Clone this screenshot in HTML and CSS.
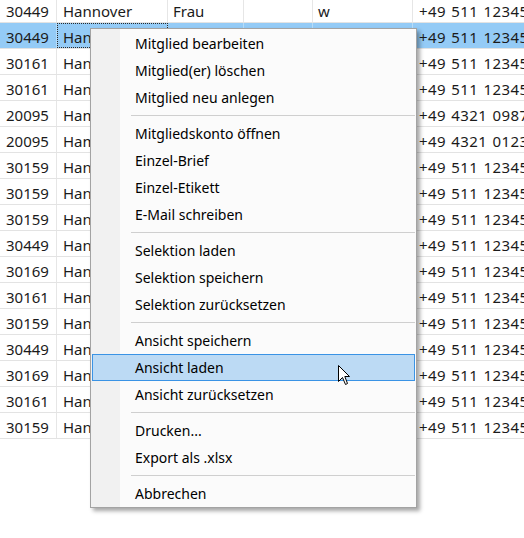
FILE: index.html
```html
<!DOCTYPE html>
<html lang="de">
<head>
<meta charset="utf-8">
<title>Mitglieder</title>
<link rel="stylesheet" href="styles.css">
</head>
<body>
<div class="grid">
  <div class="row"><div class="c c1">30449</div><div class="c c2">Hannover</div><div class="c c3">Frau</div><div class="c c4"></div><div class="c c5">w</div><div class="c c6">+49 511 123456</div></div>
  <div class="row sel"><div class="c c1">30449</div><div class="c c2 focus">Hannover</div><div class="c c3">Frau</div><div class="c c4"></div><div class="c c5">w</div><div class="c c6">+49 511 123456</div></div>
  <div class="row"><div class="c c1">30161</div><div class="c c2">Hannover</div><div class="c c3">Herr</div><div class="c c4"></div><div class="c c5">m</div><div class="c c6">+49 511 123456</div></div>
  <div class="row"><div class="c c1">30161</div><div class="c c2">Hannover</div><div class="c c3">Frau</div><div class="c c4"></div><div class="c c5">w</div><div class="c c6">+49 511 123456</div></div>
  <div class="row"><div class="c c1">20095</div><div class="c c2">Hamburg</div><div class="c c3">Herr</div><div class="c c4"></div><div class="c c5">m</div><div class="c c6">+49 4321 098765</div></div>
  <div class="row"><div class="c c1">20095</div><div class="c c2">Hamburg</div><div class="c c3">Frau</div><div class="c c4"></div><div class="c c5">w</div><div class="c c6">+49 4321 012345</div></div>
  <div class="row"><div class="c c1">30159</div><div class="c c2">Hannover</div><div class="c c3">Herr</div><div class="c c4"></div><div class="c c5">m</div><div class="c c6">+49 511 123456</div></div>
  <div class="row"><div class="c c1">30159</div><div class="c c2">Hannover</div><div class="c c3">Frau</div><div class="c c4"></div><div class="c c5">w</div><div class="c c6">+49 511 123456</div></div>
  <div class="row"><div class="c c1">30159</div><div class="c c2">Hannover</div><div class="c c3">Herr</div><div class="c c4"></div><div class="c c5">m</div><div class="c c6">+49 511 123456</div></div>
  <div class="row"><div class="c c1">30449</div><div class="c c2">Hannover</div><div class="c c3">Frau</div><div class="c c4"></div><div class="c c5">w</div><div class="c c6">+49 511 123456</div></div>
  <div class="row"><div class="c c1">30169</div><div class="c c2">Hannover</div><div class="c c3">Herr</div><div class="c c4"></div><div class="c c5">m</div><div class="c c6">+49 511 123456</div></div>
  <div class="row"><div class="c c1">30161</div><div class="c c2">Hannover</div><div class="c c3">Frau</div><div class="c c4"></div><div class="c c5">w</div><div class="c c6">+49 511 123456</div></div>
  <div class="row"><div class="c c1">30159</div><div class="c c2">Hannover</div><div class="c c3">Herr</div><div class="c c4"></div><div class="c c5">m</div><div class="c c6">+49 511 123456</div></div>
  <div class="row"><div class="c c1">30449</div><div class="c c2">Hannover</div><div class="c c3">Frau</div><div class="c c4"></div><div class="c c5">w</div><div class="c c6">+49 511 123456</div></div>
  <div class="row"><div class="c c1">30169</div><div class="c c2">Hannover</div><div class="c c3">Herr</div><div class="c c4"></div><div class="c c5">m</div><div class="c c6">+49 511 123456</div></div>
  <div class="row"><div class="c c1">30161</div><div class="c c2">Hannover</div><div class="c c3">Frau</div><div class="c c4"></div><div class="c c5">w</div><div class="c c6">+49 511 123456</div></div>
  <div class="row"><div class="c c1">30159</div><div class="c c2">Hannover</div><div class="c c3">Herr</div><div class="c c4"></div><div class="c c5">m</div><div class="c c6">+49 511 123456</div></div>
</div>

<div class="menu">
  <div class="item">Mitglied bearbeiten</div>
  <div class="item">Mitglied(er) löschen</div>
  <div class="item">Mitglied neu anlegen</div>
  <div class="sep"></div>
  <div class="item">Mitgliedskonto öffnen</div>
  <div class="item">Einzel-Brief</div>
  <div class="item">Einzel-Etikett</div>
  <div class="item">E-Mail schreiben</div>
  <div class="sep"></div>
  <div class="item">Selektion laden</div>
  <div class="item">Selektion speichern</div>
  <div class="item">Selektion zurücksetzen</div>
  <div class="sep"></div>
  <div class="item">Ansicht speichern</div>
  <div class="item hover">Ansicht laden</div>
  <div class="item">Ansicht zurücksetzen</div>
  <div class="sep"></div>
  <div class="item">Drucken...</div>
  <div class="item">Export als .xlsx</div>
  <div class="sep"></div>
  <div class="item">Abbrechen</div>
</div>

<svg class="cursor" width="13" height="21" viewBox="0 0 13 21">
  <path d="M0.5 0.5 L0.5 16.5 L4.5 12.5 L7.5 19.5 L9.5 18.5 L6.8 11.5 L11.5 11.5 Z" fill="#fff" stroke="#000" stroke-width="1" stroke-linejoin="miter"/>
</svg>
</body>
</html>
```

FILE: styles.css
```css
html, body {
  margin: 0;
  padding: 0;
  background: #ffffff;
  overflow: hidden;
  width: 524px;
  height: 538px;
}

body {
  position: relative;
  font-family: "Noto Sans", "Open Sans", sans-serif;
  font-size: 15px;
  color: #1b1b1b;
}

.grid {
  margin-top: -3px;
  width: 600px;
}

.row {
  display: flex;
  height: 25px;
  border-bottom: 1px solid #e3e3e3;
}

.c {
  box-sizing: border-box;
  height: 25px;
  line-height: 28px;
  padding-left: 6px;
  border-right: 1px solid #e6e6e6;
  white-space: nowrap;
  overflow: hidden;
  flex: none;
}

.c1 { width: 57px; }
.c2 { width: 111px; }
.c3 { width: 76px; padding-left: 5px; }
.c4 { width: 69px; }
.c5 { width: 100px; padding-left: 5px; }
.c6 { width: 160px; border-right: none; letter-spacing: 0.4px; word-spacing: 1px; }

.row.sel {
  background: #94cbf6;
}

.row.sel .c {
  border-right-color: #b7dcf8;
}

.focus {
  outline: 1px dotted #2a2a2a;
  outline-offset: -1px;
}

.menu {
  position: absolute;
  left: 90px;
  top: 28px;
  width: 325px;
  padding: 1px 0 0 0;
  border: 1px solid #a3a3a3;
  background: linear-gradient(to right, #f1f1f1 0, #f1f1f1 29px, #fbfbfb 29px);
  box-shadow: 3px 3px 4px rgba(0, 0, 0, 0.35);
  font-size: 14px;
  color: #000;
}

.item {
  height: 25px;
  line-height: 25px;
  margin: 0 1px;
  padding-left: 42px;
  border: 1px solid transparent;
  white-space: nowrap;
}

.item.hover {
  background: #bcdaf4;
  border-color: #3a93e5;
}

.sep {
  height: 1px;
  margin: 4px 1px 4px 40px;
  background: #cfcfcf;
}

.cursor {
  position: absolute;
  left: 338px;
  top: 365px;
}
```
